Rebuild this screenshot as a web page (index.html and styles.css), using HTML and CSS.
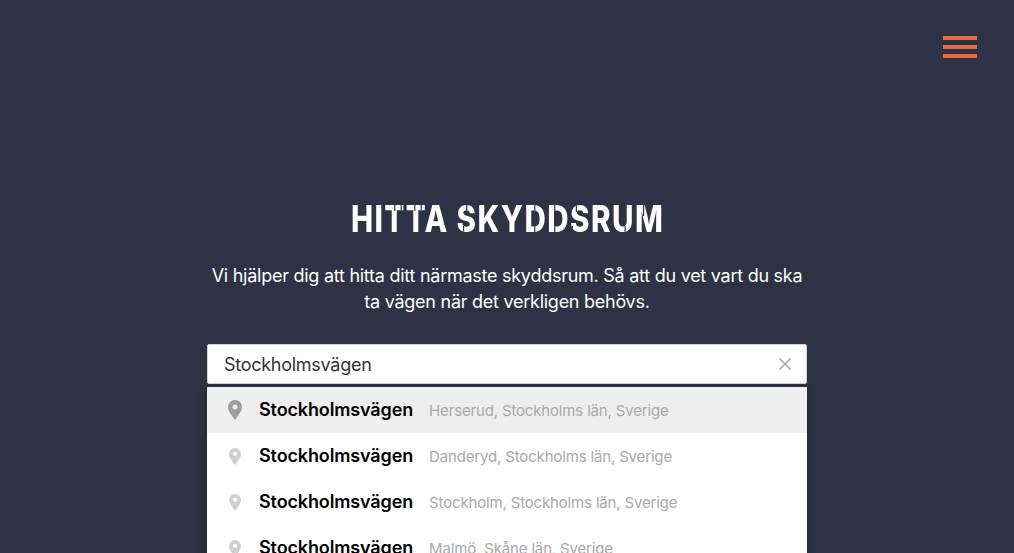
FILE: index.html
```html
<!DOCTYPE html>
<html lang="sv">
<head>
<meta charset="utf-8">
<title>Hitta skyddsrum</title>
<link rel="stylesheet" href="styles.css">
</head>
<body>
<div class="page">
  <header class="topbar">
    <button class="menu" aria-label="Meny"><span></span><span></span><span></span></button>
  </header>
  <main class="hero">
    <h1 class="title">HITTA SKYDDSRUM</h1>
    <p class="lead">Vi hjälper dig att hitta ditt närmaste skyddsrum. Så att du vet vart du ska ta vägen när det verkligen behövs.</p>
    <div class="search">
      <div class="field">
        <span class="value">Stockholmsvägen</span>
        <svg class="clear" width="14" height="14" viewBox="0 0 14 14"><path d="M1.5 1.500l11 11M12.500 1.500l-11 11" stroke="#ababab" stroke-width="1.700" fill="none"/></svg>
      </div>
      <ul class="results">
        <li class="row active">
          <span class="pin-box"><svg class="pin" width="14" height="20" viewBox="0 0 14 20"><path fill-rule="evenodd" d="M7 0a7 7 0 0 1 7 7c0 4.500-4 8.500-7 13C4 15.500 0 11.500 0 7a7 7 0 0 1 7-7zm0 4.500a2.500 2.500 0 1 0 0 5 2.500 2.500 0 0 0 0-5z"/></svg></span>
          <span class="name">Stockholmsvägen</span><span class="place">Herserud, Stockholms län, Sverige</span>
        </li>
        <li class="row">
          <span class="pin-box"><svg class="pin" width="12" height="17" viewBox="0 0 14 20"><path fill-rule="evenodd" d="M7 0a7 7 0 0 1 7 7c0 4.500-4 8.500-7 13C4 15.500 0 11.500 0 7a7 7 0 0 1 7-7zm0 4.500a2.500 2.500 0 1 0 0 5 2.500 2.500 0 0 0 0-5z"/></svg></span>
          <span class="name">Stockholmsvägen</span><span class="place">Danderyd, Stockholms län, Sverige</span>
        </li>
        <li class="row">
          <span class="pin-box"><svg class="pin" width="12" height="17" viewBox="0 0 14 20"><path fill-rule="evenodd" d="M7 0a7 7 0 0 1 7 7c0 4.500-4 8.500-7 13C4 15.500 0 11.500 0 7a7 7 0 0 1 7-7zm0 4.500a2.500 2.500 0 1 0 0 5 2.500 2.500 0 0 0 0-5z"/></svg></span>
          <span class="name">Stockholmsvägen</span><span class="place">Stockholm, Stockholms län, Sverige</span>
        </li>
        <li class="row">
          <span class="pin-box"><svg class="pin" width="12" height="17" viewBox="0 0 14 20"><path fill-rule="evenodd" d="M7 0a7 7 0 0 1 7 7c0 4.500-4 8.500-7 13C4 15.500 0 11.500 0 7a7 7 0 0 1 7-7zm0 4.500a2.500 2.500 0 1 0 0 5 2.500 2.500 0 0 0 0-5z"/></svg></span>
          <span class="name">Stockholmsvägen</span><span class="place">Malmö, Skåne län, Sverige</span>
        </li>
      </ul>
    </div>
  </main>
</div>
</body>
</html>
```
FILE: styles.css
```css
* { box-sizing: border-box; }
html, body { margin: 0; padding: 0; height: 100%; overflow: hidden; }
body { background: #2d3344; color: #fff; font-family: Inter, "Noto Sans", sans-serif; }
.page { height: 553px; overflow: hidden; }
.topbar { display: flex; justify-content: flex-end; padding: 36px 37px 0 0; height: 200px; }
.menu { display: flex; flex-direction: column; gap: 5.500px; width: 34px; height: 22px; padding: 0; border: 0; background: none; }
.menu span { display: block; width: 34px; height: 3.500px; background: #ec6a3e; }
.hero { width: 600px; margin: 0 auto; display: flex; flex-direction: column; align-items: center; }
.title {
  --cut: linear-gradient(#2d3344, #2d3344);
  margin: 0;
  padding-left: 2px;
  font: 800 37px/38px Inter, sans-serif;
  letter-spacing: 1.750px;
  text-align: center;
  white-space: nowrap;
  transform: scaleX(.8);
  color: transparent;
  background:
    var(--cut) 56px 4px / 1.500px 7px no-repeat,
    var(--cut) 64px 4px / 1.500px 7px no-repeat,
    var(--cut) 81px 4px / 1.500px 7px no-repeat,
    var(--cut) 89px 4px / 1.500px 7px no-repeat,
    var(--cut) 118px 20px / 1.500px 5px no-repeat,
    var(--cut) 146px 5px / 1.500px 7px no-repeat,
    var(--cut) 142px 26px / 1.500px 7px no-repeat,
    var(--cut) 231px 4px / 1.500px 7px no-repeat,
    var(--cut) 231px 26px / 1.500px 7px no-repeat,
    var(--cut) 256px 4px / 1.500px 7px no-repeat,
    var(--cut) 256px 26px / 1.500px 7px no-repeat,
    var(--cut) 283px 5px / 1.500px 7px no-repeat,
    var(--cut) 278px 26px / 1.500px 7px no-repeat,
    var(--cut) 344px 26px / 1.500px 7px no-repeat,
    var(--cut) 367px 4px / 1.500px 12px no-repeat,
    linear-gradient(#fff, #fff);
  -webkit-background-clip: text;
  background-clip: text;
}
.lead { margin: 25px 0 0; width: 600px; font-size: 18px; letter-spacing: -0.26px; line-height: 26px; text-align: center; }
.search { width: 600px; margin-top: 29px; }
.field { height: 40px; background: #fff; border: 1px solid #d4d4d4; border-radius: 2px; display: flex; align-items: center; justify-content: space-between; padding: 0 14px 0 16px; color: #333; font-size: 18px; letter-spacing: -0.27px; }
.results { list-style: none; margin: 3px 0 0; padding: 0; background: #fff; border-radius: 2px 2px 0 0; box-shadow: 0 2px 12px rgba(0,0,0,.3); }
.row { height: 46px; display: flex; align-items: center; padding-left: 20px; }
.row.active { background: #eeeeee; }
.pin-box { width: 16px; display: flex; justify-content: center; flex: none; }
.pin { fill: #cfcfcf; }
.row.active .pin { fill: #9f9f9f; }
.name { margin: -2px 0 0 16px; color: #000; font-size: 18px; font-weight: 600; letter-spacing: -0.13px; white-space: nowrap; }
.place { margin-left: 16px; color: #a9a9a9; font-size: 15px; letter-spacing: -0.16px; white-space: nowrap; }
```
